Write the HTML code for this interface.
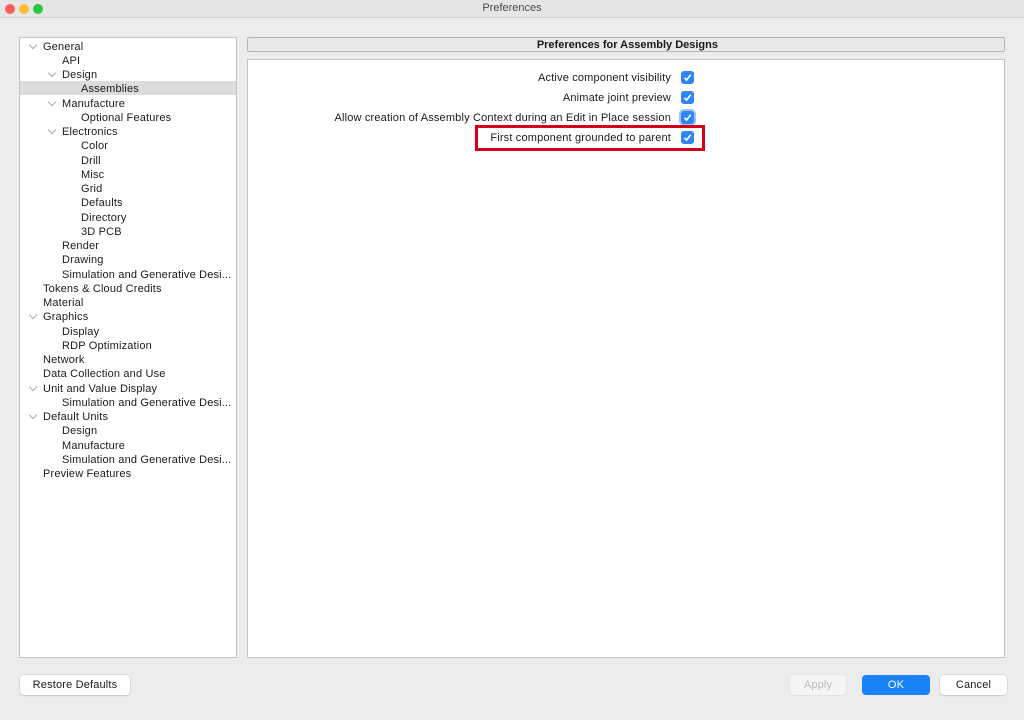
<!DOCTYPE html>
<html><head><meta charset="utf-8"><style>
*{margin:0;padding:0;box-sizing:border-box}
body{width:1024px;height:720px;background:#ececec;font-family:"Liberation Sans",sans-serif;font-size:11px;color:#1a1a1a;position:relative;overflow:hidden;letter-spacing:0.17px}
.title{position:absolute;left:0;top:0;width:1024px;height:18px;background:#e6e6e6;border-bottom:1px solid #d0d0d0;text-align:center;line-height:17px;font-size:11px;color:#4a4a4a;letter-spacing:0}
.dot{position:absolute;top:4px;width:10px;height:10px;border-radius:50%}
.tree{position:absolute;left:19px;top:37px;width:218px;height:621px;background:#fff;border:1px solid #c4c4c4}
.r{position:absolute;left:0;width:216px;height:14px;line-height:16px;white-space:nowrap}
.sel{background:#dcdcdc}
.chev{position:absolute;top:3px;width:6px;height:6px;border-right:1px solid #aaa;border-bottom:1px solid #aaa;transform:rotate(45deg)}
.hdr{position:absolute;left:247px;top:37px;width:758px;height:15px;background:#e9e9e9;border:1px solid #b5b5b5;border-radius:2px;text-align:right;padding-right:286px;font-weight:bold;line-height:14px;letter-spacing:0}
.panel{position:absolute;left:247px;top:59px;width:758px;height:599px;background:#fff;border:1px solid #c4c4c4}
.opt{position:absolute;right:353px;height:14px;line-height:16px;white-space:nowrap}
.cb{position:absolute;left:681px;width:13px;height:13px;background:#2f86f0;border-radius:3px}
.cb svg{position:absolute;left:1px;top:1px}
.red{position:absolute;left:475px;top:125px;width:230px;height:26px;border:3px solid #d4001a}
.btn{position:absolute;top:675px;height:20px;background:#fff;border-radius:4px;box-shadow:0 0 0 .5px #c8c8c8,0 1px 1px rgba(0,0,0,.15);text-align:center;line-height:20px}
</style></head><body>
<div class="title">Preferences
<div class="dot" style="left:5px;background:#fe5f57"></div>
<div class="dot" style="left:19px;background:#febc2e"></div>
<div class="dot" style="left:33px;background:#28c840"></div>
</div>
<div class="tree">
<div class="r" style="top:1px"><i class="chev" style="left:10px"></i><span style="position:absolute;left:23px">General</span></div>
<div class="r" style="top:15px"><span style="position:absolute;left:42px">API</span></div>
<div class="r" style="top:29px"><i class="chev" style="left:29px"></i><span style="position:absolute;left:42px">Design</span></div>
<div class="r sel" style="top:43px"><span style="position:absolute;left:61px">Assemblies</span></div>
<div class="r" style="top:58px"><i class="chev" style="left:29px"></i><span style="position:absolute;left:42px">Manufacture</span></div>
<div class="r" style="top:72px"><span style="position:absolute;left:61px">Optional Features</span></div>
<div class="r" style="top:86px"><i class="chev" style="left:29px"></i><span style="position:absolute;left:42px">Electronics</span></div>
<div class="r" style="top:100px"><span style="position:absolute;left:61px">Color</span></div>
<div class="r" style="top:115px"><span style="position:absolute;left:61px">Drill</span></div>
<div class="r" style="top:129px"><span style="position:absolute;left:61px">Misc</span></div>
<div class="r" style="top:143px"><span style="position:absolute;left:61px">Grid</span></div>
<div class="r" style="top:157px"><span style="position:absolute;left:61px">Defaults</span></div>
<div class="r" style="top:172px"><span style="position:absolute;left:61px">Directory</span></div>
<div class="r" style="top:186px"><span style="position:absolute;left:61px">3D PCB</span></div>
<div class="r" style="top:200px"><span style="position:absolute;left:42px">Render</span></div>
<div class="r" style="top:214px"><span style="position:absolute;left:42px">Drawing</span></div>
<div class="r" style="top:229px"><span style="position:absolute;left:42px">Simulation and Generative Desi...</span></div>
<div class="r" style="top:243px"><span style="position:absolute;left:23px">Tokens &amp; Cloud Credits</span></div>
<div class="r" style="top:257px"><span style="position:absolute;left:23px">Material</span></div>
<div class="r" style="top:271px"><i class="chev" style="left:10px"></i><span style="position:absolute;left:23px">Graphics</span></div>
<div class="r" style="top:286px"><span style="position:absolute;left:42px">Display</span></div>
<div class="r" style="top:300px"><span style="position:absolute;left:42px">RDP Optimization</span></div>
<div class="r" style="top:314px"><span style="position:absolute;left:23px">Network</span></div>
<div class="r" style="top:328px"><span style="position:absolute;left:23px">Data Collection and Use</span></div>
<div class="r" style="top:343px"><i class="chev" style="left:10px"></i><span style="position:absolute;left:23px">Unit and Value Display</span></div>
<div class="r" style="top:357px"><span style="position:absolute;left:42px">Simulation and Generative Desi...</span></div>
<div class="r" style="top:371px"><i class="chev" style="left:10px"></i><span style="position:absolute;left:23px">Default Units</span></div>
<div class="r" style="top:385px"><span style="position:absolute;left:42px">Design</span></div>
<div class="r" style="top:400px"><span style="position:absolute;left:42px">Manufacture</span></div>
<div class="r" style="top:414px"><span style="position:absolute;left:42px">Simulation and Generative Desi...</span></div>
<div class="r" style="top:428px"><span style="position:absolute;left:23px">Preview Features</span></div>
</div>
<div class="hdr">Preferences for Assembly Designs</div>
<div class="panel"></div>
<div class="opt" style="top:70px">Active component visibility</div>
<div class="opt" style="top:90px">Animate joint preview</div>
<div class="opt" style="top:110px">Allow creation of Assembly Context during an Edit in Place session</div>
<div class="opt" style="top:130px">First component grounded to parent</div>
<div class="cb" style="top:71px"><svg width="11" height="11"><path d="M2.5 5.8L4.6 8L8.7 2.8" stroke="#fff" stroke-width="1.6" fill="none"/></svg></div>
<div class="cb" style="top:91px"><svg width="11" height="11"><path d="M2.5 5.8L4.6 8L8.7 2.8" stroke="#fff" stroke-width="1.6" fill="none"/></svg></div>
<div class="cb" style="top:111px;box-shadow:0 0 0 2px #9cc3f3"><svg width="11" height="11"><path d="M2.5 5.8L4.6 8L8.7 2.8" stroke="#fff" stroke-width="1.6" fill="none"/></svg></div>
<div class="cb" style="top:131px"><svg width="11" height="11"><path d="M2.5 5.8L4.6 8L8.7 2.8" stroke="#fff" stroke-width="1.6" fill="none"/></svg></div>
<div class="red"></div>
<div class="btn" style="left:20px;width:110px">Restore Defaults</div>
<div class="btn" style="left:790px;width:56px;color:#bbb;background:#f5f5f5;box-shadow:0 0 0 .5px #ddd">Apply</div>
<div class="btn" style="left:862px;width:68px;background:#1a82f7;color:#fff;box-shadow:none">OK</div>
<div class="btn" style="left:940px;width:67px">Cancel</div>
</body></html>
